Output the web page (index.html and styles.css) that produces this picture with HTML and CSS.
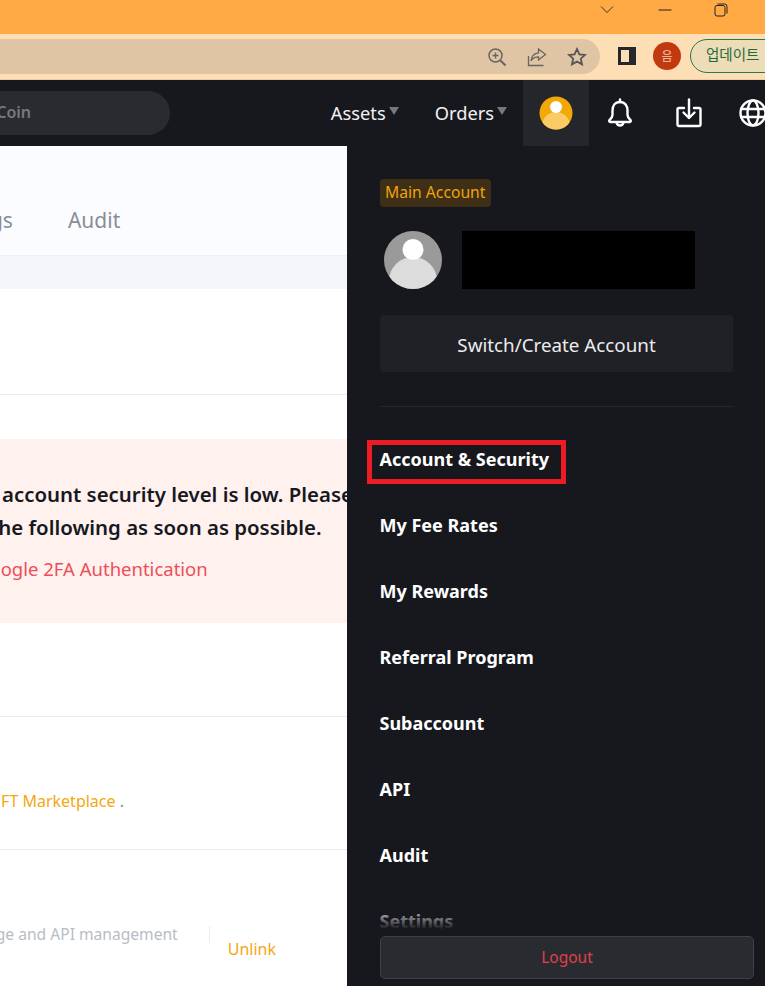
FILE: index.html
```html
<!DOCTYPE html>
<html lang="en">
<head>
    <meta charset="UTF-8">
    <title>Account</title>
    <link rel="stylesheet" href="styles.css">
</head>
<body>
    <div class="window">
        <div class="titlebar">
            <svg class="win-chevron" width="14" height="10" viewBox="0 0 14 10"><path d="M1 1.500l6 6 6-6" fill="none" stroke="#333" stroke-width="1"/></svg>
            <svg class="win-min" width="14" height="10" viewBox="0 0 14 10"><path d="M0.500 5h13" fill="none" stroke="#222" stroke-width="1"/></svg>
            <svg class="win-restore" width="14" height="14" viewBox="0 0 14 14"><rect x="1" y="2.500" width="10" height="10.500" rx="2" fill="none" stroke="#222"/><path d="M3.500 1h7a2.500 2.500 0 0 1 2.500 2.500v7" fill="none" stroke="#222"/></svg>
        </div>

        <div class="toolbar">
            <div class="address-bar">
                <svg width="20" height="20" viewBox="0 0 20 20" fill="none" stroke="#666" stroke-width="1.500"><circle cx="8.500" cy="8.500" r="6.500"/><path d="M8.500 5.500v6M5.500 8.500h6"/><path d="M13.500 13.500l5 5" stroke-width="2"/></svg>
                <svg width="20" height="20" viewBox="0 0 20 20" fill="none" stroke="#666" stroke-width="1.300"><path d="M1.500 9v9.500h15"/><path d="M11.500 2l7 5.500-7 5.500v-3.200c-3.500 0-6 1.200-7.500 4.200 .5-4.500 3-7.700 7.500-8.200z"/></svg>
                <svg width="20" height="20" viewBox="0 0 20 20" fill="none" stroke="#555" stroke-width="1.800"><path d="M10 2l2.400 5.300 5.600 .6-4.200 3.800 1.200 5.700-5-2.900-5 2.900 1.200-5.700-4.200-3.800 5.600-.6z"/></svg>
            </div>
            <div class="side-panel"><span></span></div>
            <div class="profile-dot">음</div>
            <div class="update-pill">업데이트</div>
        </div>

        <div class="topnav">
            <div class="search-pill"><span>Search Coin</span></div>
            <div class="nav-right">
                <a class="nav-link">Assets<i class="caret"></i></a>
                <a class="nav-link">Orders<i class="caret"></i></a>
                <div class="nav-avatar">
                    <svg width="34" height="34" viewBox="0 0 34 34"><defs><clipPath id="nav-clip"><circle cx="17" cy="17" r="16.500"/></clipPath></defs><circle cx="17" cy="17" r="16.500" fill="#f4a805"/><g clip-path="url(#nav-clip)"><ellipse cx="17" cy="30" rx="14" ry="14" fill="#fbcb65"/></g><circle cx="17" cy="11" r="6" fill="#fff"/></svg>
                </div>
                <div class="nav-icon">
                    <svg width="26" height="30" viewBox="0 0 26 30" fill="none" stroke="#fff" stroke-width="2.400" stroke-linejoin="round" stroke-linecap="round"><path d="M13 1.500v2.500"/><path d="M13 4c-5 0-7.500 3.800-7.500 8.500v4.500c0 2.200-1.500 3.500-3 5a1.200 1.200 0 0 0 .8 2h19.400a1.200 1.200 0 0 0 .8-2c-1.500-1.500-3-2.800-3-5v-4.500C20.500 7.800 18 4 13 4z"/><path d="M9.500 24.500c.5 2 2 3 3.500 3s3-1 3.500-3"/></svg>
                </div>
                <div class="nav-icon">
                    <svg width="26" height="30" viewBox="0 0 26 30" fill="none" stroke="#fff" stroke-width="2.400" stroke-linecap="round" stroke-linejoin="round"><path d="M8 10H3a1.500 1.500 0 0 0-1.500 1.500v15a1.500 1.500 0 0 0 1.500 1.500h20a1.500 1.500 0 0 0 1.500-1.500v-15A1.500 1.500 0 0 0 23 10h-5"/><path d="M13 1.500v18"/><path d="M7.500 14.500l5.500 5.500 5.500-5.500"/></svg>
                </div>
                <div class="nav-icon nav-globe">
                    <svg width="28" height="28" viewBox="0 0 28 28" fill="none" stroke="#fff" stroke-width="2.400"><circle cx="14" cy="14" r="12.500"/><ellipse cx="14" cy="14" rx="5.500" ry="12.500"/><path d="M1.500 10h25M1.500 18h25"/></svg>
                </div>
            </div>
        </div>

        <div class="main">
            <div class="content">
                <div class="tabs">
                    <span class="tab tab-settings">Settings</span>
                    <span class="tab">Audit</span>
                </div>
                <div class="strip"></div>
                <div class="section section-plain"></div>
                <div class="alert-wrap">
                    <div class="alert">
                        <p class="alert-title alert-line-one">Your account security level is low. Please complete</p>
                        <p class="alert-title alert-line-two">the following as soon as possible.</p>
                        <p class="alert-link">Google 2FA Authentication</p>
                    </div>
                </div>
                <div class="section section-spacer"></div>
                <div class="section section-nft">
                    <span class="nft-text">Buy and sell on the NFT Marketplace <em>.</em></span>
                </div>
                <div class="section-api">
                    <span class="api-text">Exchange and API management</span>
                    <span class="api-rule"></span>
                    <a class="unlink">Unlink</a>
                </div>
            </div>

            <div class="drawer">
                <span class="badge">Main Account</span>
                <div class="account-row">
                    <svg width="58" height="58" viewBox="0 0 58 58"><defs><clipPath id="user-clip"><circle cx="29" cy="29" r="29"/></clipPath></defs><circle cx="29" cy="29" r="29" fill="#9a9a9a"/><g clip-path="url(#user-clip)"><ellipse cx="29" cy="50" rx="24" ry="24" fill="#dcdcdc"/></g><circle cx="29" cy="18.500" r="10.500" fill="#fff"/></svg>
                    <div class="redacted"></div>
                </div>
                <div class="switch-btn">Switch/Create Account</div>
                <div class="drawer-rule"></div>
                <ul class="menu">
                    <li class="menu-item menu-marked">Account &amp; Security</li>
                    <li class="menu-item">My Fee Rates</li>
                    <li class="menu-item">My Rewards</li>
                    <li class="menu-item">Referral Program</li>
                    <li class="menu-item">Subaccount</li>
                    <li class="menu-item">API</li>
                    <li class="menu-item">Audit</li>
                    <li class="menu-item">Settings</li>
                </ul>
                <div class="logout-wrap">
                    <div class="logout-btn">Logout</div>
                </div>
            </div>
        </div>
    </div>
</body>
</html>
```

FILE: styles.css
```css
*, *::before, *::after {
    box-sizing: border-box;
}
html, body {
    margin: 0;
    padding: 0;
}
body {
    font-family: "Noto Sans", Roboto, sans-serif;
    background-color: #ffffff;
}
p, ul {
    margin: 0;
    padding: 0;
}
.window {
    width: 765px;
    height: 986px;
    overflow: hidden;
    display: flex;
    flex-direction: column;
}

/* browser frame */
.titlebar {
    height: 34px;
    background-color: #ffaa44;
    display: flex;
    justify-content: flex-end;
    align-items: center;
    padding: 0 37px 15px 0;
}
.win-chevron {
    margin-right: 44px;
}
.win-min {
    margin-right: 42px;
}
.toolbar {
    height: 46px;
    background-color: #fedeb4;
    border-bottom: 1px solid #e9cca5;
    display: flex;
    align-items: center;
}
.address-bar {
    width: 600px;
    height: 35px;
    flex-shrink: 0;
    background-color: #dfc5a3;
    border-radius: 0 18px 18px 0;
    display: flex;
    justify-content: flex-end;
    align-items: center;
    gap: 20px;
    padding-right: 13px;
}
.side-panel {
    width: 18px;
    height: 18px;
    flex-shrink: 0;
    margin: 0 0 1px 18px;
    background-color: #26272b;
    padding: 3px 7px 3px 3px;
}
.side-panel span {
    display: block;
    height: 100%;
    background-color: #fedeb4;
}
.profile-dot {
    width: 28px;
    height: 28px;
    flex-shrink: 0;
    margin: 0 0 1px 17px;
    border-radius: 50%;
    background-color: #c1390f;
    color: #f6c9b5;
    font-family: "Noto Sans CJK KR", sans-serif;
    font-size: 12px;
    line-height: 28px;
    text-align: center;
}
.update-pill {
    height: 34px;
    width: 100px;
    flex-shrink: 0;
    margin: 0 0 1px 9px;
    padding-left: 15px;
    border: 1.500px solid #2a7a4a;
    border-radius: 17px;
    background-color: #ecdcb8;
    color: #1f6b3f;
    font-family: "Noto Sans CJK KR", sans-serif;
    font-size: 14.500px;
    line-height: 28px;
    white-space: nowrap;
}

/* site nav */
.topnav {
    height: 66px;
    background-color: #17181e;
    display: flex;
    align-items: center;
    justify-content: space-between;
}
.search-pill {
    width: 170px;
    height: 44px;
    background-color: #2a2b30;
    border-radius: 0 22px 22px 0;
    display: flex;
    align-items: center;
    justify-content: flex-end;
    overflow: hidden;
    white-space: nowrap;
    padding: 0 139px 2px 0;
    color: #77787c;
    font-size: 16px;
    font-weight: 600;
}
.nav-right {
    display: flex;
    align-items: center;
    height: 100%;
    margin-right: -2px;
    color: #ffffff;
    flex-shrink: 0;
}
.nav-link {
    font-size: 18.300px;
    margin-right: 36px;
    padding-bottom: 2px;
    display: flex;
    align-items: center;
    color: #f2f2f2;
}
.nav-link + .nav-link {
    margin-right: 16px;
}
.caret {
    width: 0;
    height: 0;
    margin: -3px 0 0 3px;
    border-left: 5.500px solid transparent;
    border-right: 5.500px solid transparent;
    border-top: 8px solid #77787c;
}
.nav-avatar {
    width: 66px;
    height: 66px;
    background-color: #25262b;
    display: flex;
    align-items: center;
    justify-content: center;
    margin-right: 18px;
}
.nav-icon {
    width: 26px;
    display: flex;
    justify-content: center;
}
.nav-icon + .nav-icon {
    margin-left: 43px;
}
.nav-icon.nav-globe {
    width: 28px;
    margin-left: 37px;
}

/* page under the drawer */
.main {
    flex: 1;
    display: flex;
    min-height: 0;
}
.content {
    width: 347px;
    flex-shrink: 0;
    overflow: hidden;
    background-color: #ffffff;
    white-space: nowrap;
}
.tabs {
    height: 110px;
    background-color: #fbfcff;
    border-bottom: 1px solid #f0f1f5;
    display: flex;
    align-items: center;
    padding-top: 38px;
    gap: 55px;
    color: #8a8d94;
    font-size: 21px;
}
.tab-settings {
    margin-left: -67px;
}
.strip {
    height: 33px;
    background-color: #f5f6fa;
}
.section {
    border-bottom: 1px solid #eaecf2;
}
.section-plain {
    height: 106px;
}
.alert-wrap {
    padding-top: 44px;
}
.alert {
    height: 184px;
    background-color: #fef1ee;
    padding-top: 39px;
}
.alert-title {
    font-size: 20.400px;
    font-weight: 600;
    line-height: 33px;
    color: #17181e;
}
.alert-line-one {
    margin-left: -49px;
}
.alert-line-two {
    margin-left: -10px;
}
.alert-link {
    margin-left: -24px;
    margin-top: 12px;
    font-size: 18.500px;
    line-height: 26px;
    color: #ee4d5a;
}
.section-spacer {
    height: 94px;
}
.section-nft {
    height: 133px;
    display: flex;
    justify-content: flex-end;
    padding: 72px 223px 0 0;
    font-size: 16px;
    line-height: 24px;
    color: #f4a70f;
}
.nft-text {
    flex-shrink: 0;
}
.nft-text em {
    font-style: normal;
    color: #8a8d94;
}
.section-api {
    display: flex;
    align-items: flex-start;
    justify-content: flex-end;
    padding: 72px 71px 0 0;
    font-size: 16px;
    line-height: 24px;
}
.api-text {
    flex-shrink: 0;
    font-size: 15.600px;
    color: #b7bdc6;
}
.api-rule {
    width: 1px;
    height: 17px;
    flex-shrink: 0;
    margin: 4px 18px 0 31px;
    background-color: #eaecef;
}
.unlink {
    flex-shrink: 0;
    margin-top: 15px;
    color: #f4a70f;
}

/* account drawer */
.drawer {
    flex: 1;
    position: relative;
    background-color: #17181e;
    padding: 33px 32px 0 33px;
    overflow: hidden;
}
.badge {
    display: inline-block;
    height: 28px;
    padding: 0 6px 0 5px;
    border-radius: 4px;
    background-color: #3e2f16;
    color: #f0a30a;
    font-size: 15.700px;
    line-height: 27px;
    vertical-align: top;
}
.account-row {
    display: flex;
    gap: 20px;
    margin-top: 24px;
    padding-left: 4px;
}
.redacted {
    width: 233px;
    height: 58px;
    background-color: #000000;
}
.switch-btn {
    height: 57px;
    margin-top: 26px;
    border-radius: 4px;
    background-color: #202126;
    color: #ececec;
    font-size: 18.800px;
    line-height: 60px;
    text-align: center;
}
.drawer-rule {
    height: 1px;
    margin-top: 34px;
    background-color: #26272c;
}
.menu {
    list-style: none;
    margin: 19px 0 0 -0.500px;
}
.menu-item {
    height: 66px;
    color: #ffffff;
    font-size: 18px;
    font-weight: 700;
    line-height: 66px;
}
.menu-marked {
    position: relative;
}
.menu-marked::after {
    content: "";
    position: absolute;
    left: -12.500px;
    top: 14px;
    width: 199px;
    height: 44px;
    border: 5px solid #ec1c24;
}
.logout-wrap {
    position: absolute;
    left: 33px;
    right: 11px;
    bottom: 7px;
}
.logout-wrap::before {
    content: "";
    position: absolute;
    left: -5px;
    right: 0;
    top: -26px;
    height: 26px;
    background: linear-gradient(to bottom, rgba(23, 24, 30, 0.25), #17181e 75%);
}
.logout-btn {
    height: 43px;
    border: 1px solid #3f4046;
    border-radius: 5px;
    background-color: #2a2b30;
    color: #e0404a;
    font-size: 15.500px;
    line-height: 41px;
    text-align: center;
}
```
